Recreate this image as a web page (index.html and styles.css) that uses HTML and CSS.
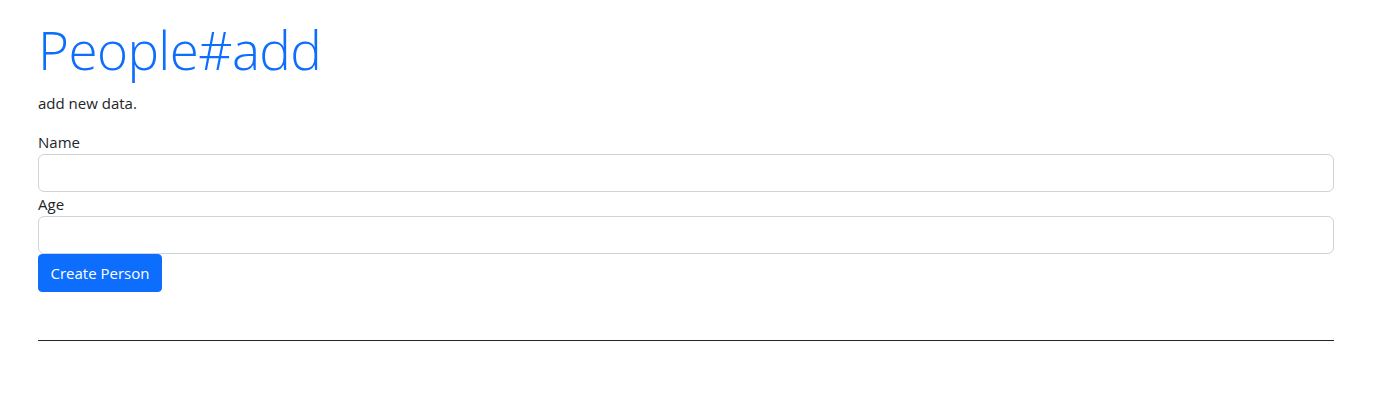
FILE: index.html
```html
<!DOCTYPE html>
<html lang="en">
<head>
<meta charset="utf-8">
<title>People#add</title>
<link rel="stylesheet" href="styles.css">
</head>
<body>
<main class="container">
  <h1 class="title">People#add</h1>
  <p class="lead-text">add new data.</p>
  <form class="person-form">
    <label class="form-label" for="name">Name</label>
    <input class="form-control" id="name" type="text">
    <label class="form-label form-label-next" for="age">Age</label>
    <input class="form-control" id="age" type="text">
    <button class="btn-primary" type="button">Create Person</button>
  </form>
  <hr class="divider">
</main>
</body>
</html>
```
FILE: styles.css
```css
* { box-sizing: border-box; }
html, body { margin: 0; padding: 0; background: #fff; }
body {
  font-family: "Open Sans", "Noto Sans", sans-serif;
  font-size: 15px;
  color: #212529;
}
.container {
  width: 1296px;
  margin-left: 38px;
  padding-top: 16px;
  display: flex;
  flex-direction: column;
}
.title {
  margin: 0;
  font-weight: 300;
  font-size: 53px;
  line-height: 67px;
  color: #0d6efd;
  letter-spacing: -0.6px;
}
.lead-text {
  margin: 8px 0 16px;
  line-height: 24px;
}
.person-form {
  display: flex;
  flex-direction: column;
  align-items: flex-start;
}
.form-label {
  line-height: 23px;
  height: 23px;
}
.form-label-next {
  margin-top: 1px;
}
.form-control {
  width: 100%;
  height: 38px;
  border: 1px solid #ced4da;
  border-radius: 6px;
  padding: 6px 12px;
  font: inherit;
}
.btn-primary {
  height: 38px;
  padding: 0 11.5px;
  border: 1px solid #0d6efd;
  background: #0d6efd;
  color: #fff;
  border-radius: 4px;
  font: inherit;
}
.divider {
  width: 100%;
  margin: 48px 0 0;
  border: 0;
  border-top: 1px solid #212529;
}
```
